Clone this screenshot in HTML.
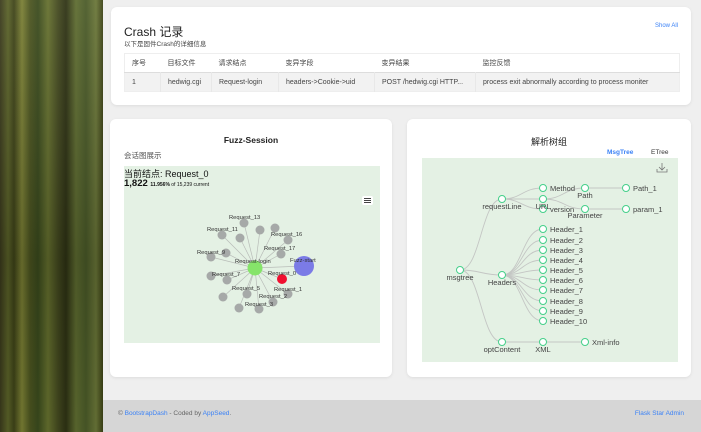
<!DOCTYPE html>
<html><head><meta charset="utf-8"><style>
*{margin:0;padding:0;box-sizing:border-box}
body{width:701px;height:432px;overflow:hidden;background:#efefef;font-family:"Liberation Sans","Noto Sans CJK SC",sans-serif;position:relative}
.side{position:absolute;left:0;top:0;width:103px;height:432px;background:
linear-gradient(90deg,#3a3a1c 0,#5a6228 8px,#3e4318 14px,#7a7f34 22px,#4c5520 30px,#3a4a1d 38px,#65702e 48px,#43491f 58px,#2e3214 66px,#5e6c30 76px,#4a5a28 86px,#6a7638 96px,#3c4216 103px);}
.side:after{content:"";position:absolute;inset:0;background:linear-gradient(180deg,rgba(255,255,255,.06),rgba(0,0,0,.18) 60%,rgba(0,0,0,.08))}
.card{position:absolute;background:#fff;border-radius:6px;box-shadow:0 1px 3px rgba(0,0,0,.08)}
table{border-collapse:collapse;font-size:7px;color:#444;position:absolute;left:13px;top:46px;width:556px;table-layout:fixed}
td{height:19px;padding-left:7px;border-right:1px solid #e8e8e8;white-space:nowrap;overflow:hidden}
tr.b td{background:#f2f2f2;border-top:1px solid #ddd}
tr.h td{border-right:none}
.foot{position:absolute;left:103px;top:400px;width:598px;height:32px;background:#d6d6d6;font-size:6.5px;color:#666}
a{color:#3b82f6;text-decoration:none}
</style></head><body>
<div class="side"></div>
<div class="card" style="left:111px;top:7px;width:580px;height:98px">
 <div style="position:absolute;left:13px;top:16px;font-size:12px;color:#222">Crash 记录</div>
 <div style="position:absolute;left:13px;top:31px;font-size:6.5px;color:#444">以下是固件Crash的详细信息</div>
 <div style="position:absolute;right:13px;top:16px;font-size:6px;color:#3b82f6">Show All</div>
 <table style="border:1px solid #eee">
 <colgroup><col style="width:36px"><col style="width:51px"><col style="width:67px"><col style="width:96px"><col style="width:101px"><col></colgroup>
 <tr class="h"><td>序号</td><td>目标文件</td><td>请求结点</td><td>变异字段</td><td>变异结果</td><td>监控反馈</td></tr>
 <tr class="b"><td>1</td><td>hedwig.cgi</td><td>Request-login</td><td>headers-&gt;Cookie-&gt;uid</td><td>POST /hedwig.cgi HTTP...</td><td style="border-right:none">process exit abnormally according to process moniter</td></tr>
 </table>
</div>
<div class="card" style="left:110px;top:119px;width:282px;height:258px">
 <div style="position:absolute;left:0;width:100%;top:16px;text-align:center;font-size:8.5px;font-weight:bold;color:#222">Fuzz-Session</div>
 <div style="position:absolute;left:14px;top:31px;font-size:7.5px;color:#555">会话图展示</div>
 <div style="position:absolute;left:14px;top:47px;width:256px;height:177px;background:#e4f1e4">
  <div style="position:absolute;left:0;top:1px;font-size:9px;color:#111">当前结点: Request_0</div>
  <div style="position:absolute;left:0;top:12px;font-size:9.5px;font-weight:bold;color:#111">1,822 <span style="font-size:5px;font-weight:bold">11.956%</span><span style="font-size:5px;font-weight:normal"> of 15,239 current</span></div>
  <div style="position:absolute;left:238px;top:30px;width:11px;height:9px;background:#fff;border-radius:2px"><div style="margin:2px 2px;height:5px;border-top:1px solid #444;border-bottom:1px solid #444;position:relative"><div style="position:absolute;top:1px;left:0;right:0;border-top:1px solid #444"></div></div></div>
 </div>
</div>
<div class="card" style="left:407px;top:119px;width:284px;height:258px">
 <div style="position:absolute;left:0;width:100%;top:16px;text-align:center;font-size:9px;color:#222">解析树组</div>
 <div style="position:absolute;left:200px;top:30px;font-size:6.5px;font-weight:bold;color:#3b82f6">MsgTree</div>
 <div style="position:absolute;left:244px;top:30px;font-size:6.5px;color:#333">ETree</div>
 <div style="position:absolute;left:15px;top:39px;width:256px;height:204px;background:#e4f1e4"></div>
</div>
<svg style="position:absolute;left:0;top:0" width="701" height="432" font-family="Liberation Sans, sans-serif">
<g stroke="#b8bcb8" stroke-width="0.7">
<line x1="255" y1="268" x2="244" y2="223"/><line x1="255" y1="268" x2="260" y2="230"/><line x1="255" y1="268" x2="275" y2="228"/><line x1="255" y1="268" x2="222" y2="235"/><line x1="255" y1="268" x2="240" y2="238"/><line x1="255" y1="268" x2="288" y2="240"/><line x1="255" y1="268" x2="226" y2="253"/><line x1="255" y1="268" x2="211" y2="257"/><line x1="255" y1="268" x2="281" y2="254"/><line x1="255" y1="268" x2="211" y2="276"/><line x1="255" y1="268" x2="227" y2="280"/><line x1="255" y1="268" x2="288" y2="294"/><line x1="255" y1="268" x2="247" y2="294"/><line x1="255" y1="268" x2="223" y2="297"/><line x1="255" y1="268" x2="273" y2="302"/><line x1="255" y1="268" x2="239" y2="308"/><line x1="255" y1="268" x2="259" y2="309"/><line x1="255" y1="268" x2="304" y2="266"/><line x1="255" y1="268" x2="282" y2="279"/>
</g>
<g fill="#a6a9a8">
<circle cx="244" cy="223" r="4.5"/><circle cx="260" cy="230" r="4.5"/><circle cx="275" cy="228" r="4.5"/><circle cx="222" cy="235" r="4.5"/><circle cx="240" cy="238" r="4.5"/><circle cx="288" cy="240" r="4.5"/><circle cx="226" cy="253" r="4.5"/><circle cx="211" cy="257" r="4.5"/><circle cx="281" cy="254" r="4.5"/><circle cx="211" cy="276" r="4.5"/><circle cx="227" cy="280" r="4.5"/><circle cx="288" cy="294" r="4.5"/><circle cx="247" cy="294" r="4.5"/><circle cx="223" cy="297" r="4.5"/><circle cx="273" cy="302" r="4.5"/><circle cx="239" cy="308" r="4.5"/><circle cx="259" cy="309" r="4.5"/>
</g>
<circle cx="304" cy="266" r="10" fill="#7b7be6"/><circle cx="255" cy="268" r="7.5" fill="#86e46a"/><circle cx="282" cy="279" r="5" fill="#f01030"/>
<g font-size="5.8" fill="#333">
<text x="229" y="219">Request_13</text><text x="207" y="231">Request_11</text><text x="271" y="236">Request_16</text><text x="197" y="254">Request_9</text><text x="264" y="250">Request_17</text><text x="235" y="263">Request-login</text><text x="290" y="262">Fuzz-start</text><text x="268" y="275">Request_0</text><text x="212" y="276">Request_7</text><text x="274" y="291">Request_1</text><text x="232" y="290">Request_5</text><text x="259" y="298">Request_2</text><text x="245" y="306">Request_3</text>
</g>
<g fill="none" stroke="#c4c6c4" stroke-width="0.9">
<path d="M460 270 C481 270 481 199 502 199"/><path d="M460 270 C481 270 481 275 502 275"/><path d="M460 270 C481 270 481 342 502 342"/>
<path d="M502 199 C522 199 522 188 543 188"/><path d="M502 199 L543 199"/><path d="M502 199 C522 199 522 209 543 209"/>
<path d="M543 199 C564 199 564 188 585 188"/><path d="M543 199 C564 199 564 209 585 209"/><path d="M585 188 L626 188"/><path d="M585 209 L626 209"/>
<path d="M502 342 L585 342"/>
<path d="M502 275 C522 275 522 229 543 229"/><path d="M502 275 C522 275 522 240 543 240"/><path d="M502 275 C522 275 522 250 543 250"/><path d="M502 275 C522 275 522 260 543 260"/><path d="M502 275 C522 275 522 270 543 270"/><path d="M502 275 C522 275 522 280 543 280"/><path d="M502 275 C522 275 522 290 543 290"/><path d="M502 275 C522 275 522 301 543 301"/><path d="M502 275 C522 275 522 311 543 311"/><path d="M502 275 C522 275 522 321 543 321"/>
</g>
<g fill="#fff" stroke="#45d08a" stroke-width="1">
<circle cx="460" cy="270" r="3.5"/><circle cx="502" cy="199" r="3.5"/><circle cx="502" cy="275" r="3.5"/><circle cx="502" cy="342" r="3.5"/><circle cx="543" cy="188" r="3.5"/><circle cx="543" cy="199" r="3.5"/><circle cx="543" cy="209" r="3.5"/><circle cx="585" cy="188" r="3.5"/><circle cx="585" cy="209" r="3.5"/><circle cx="626" cy="188" r="3.5"/><circle cx="626" cy="209" r="3.5"/><circle cx="543" cy="342" r="3.5"/><circle cx="585" cy="342" r="3.5"/>
<circle cx="543" cy="229" r="3.5"/><circle cx="543" cy="240" r="3.5"/><circle cx="543" cy="250" r="3.5"/><circle cx="543" cy="260" r="3.5"/><circle cx="543" cy="270" r="3.5"/><circle cx="543" cy="280" r="3.5"/><circle cx="543" cy="290" r="3.5"/><circle cx="543" cy="301" r="3.5"/><circle cx="543" cy="311" r="3.5"/><circle cx="543" cy="321" r="3.5"/>
</g>
<g font-size="7.5" fill="#444">
<text x="460" y="280" text-anchor="middle">msgtree</text><text x="502" y="209" text-anchor="middle">requestLine</text><text x="502" y="285" text-anchor="middle">Headers</text><text x="502" y="352" text-anchor="middle">optContent</text>
<text x="550" y="191">Method</text><text x="543" y="209" text-anchor="middle">URL</text><text x="550" y="212">version</text><text x="585" y="198" text-anchor="middle">Path</text><text x="585" y="218" text-anchor="middle">Parameter</text><text x="633" y="191">Path_1</text><text x="633" y="212">param_1</text><text x="543" y="352" text-anchor="middle">XML</text><text x="592" y="345">Xml-info</text>
<text x="550" y="232">Header_1</text><text x="550" y="243">Header_2</text><text x="550" y="253">Header_3</text><text x="550" y="263">Header_4</text><text x="550" y="273">Header_5</text><text x="550" y="283">Header_6</text><text x="550" y="293">Header_7</text><text x="550" y="304">Header_8</text><text x="550" y="314">Header_9</text><text x="550" y="324">Header_10</text>
</g>
<g fill="none" stroke="#777" stroke-width="0.8"><path d="M662 163 v7 M659 167 l3 3 l3 -3 M657 169 v3 h10 v-3"/></g>
</svg>
<div class="foot"><span style="position:absolute;left:15px;top:10px">© <a>BootstrapDash</a> - Coded by <a>AppSeed</a>.</span><span style="position:absolute;right:17px;top:10px;color:#3b82f6">Flask Star Admin</span></div>
</body></html>
